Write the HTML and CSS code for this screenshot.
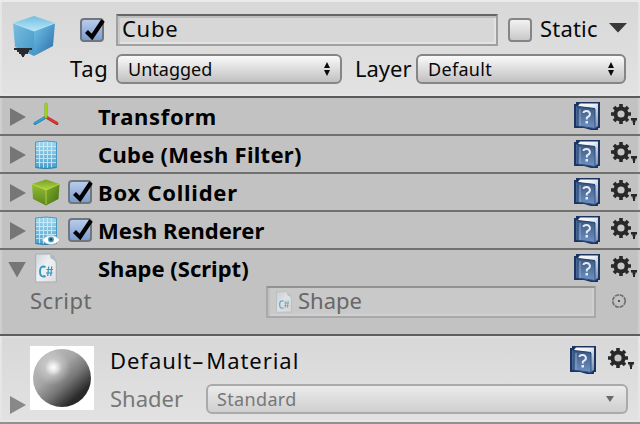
FILE: index.html
```html
<!DOCTYPE html>
<html lang="en">
<head>
<meta charset="utf-8">
<title>Inspector</title>
<link rel="stylesheet" href="styles.css">
</head>
<body>
<svg class="defs" aria-hidden="true">
  <defs>
    <linearGradient id="cubeTop" x1="0" y1="0" x2="0" y2="1"><stop offset="0" stop-color="#72bfe2"/><stop offset="1" stop-color="#b9e6f5"/></linearGradient>
    <linearGradient id="cubeLeft" x1="0" y1="0" x2="1" y2="1"><stop offset="0" stop-color="#79bede"/><stop offset="1" stop-color="#4597c9"/></linearGradient>
    <linearGradient id="cubeRight" x1="0" y1="0" x2="1" y2="1"><stop offset="0" stop-color="#74c4ea"/><stop offset="1" stop-color="#276da7"/></linearGradient>
    <linearGradient id="greenTop" x1="0" y1="0" x2="0" y2="1"><stop offset="0" stop-color="#779f21"/><stop offset="1" stop-color="#b4d843"/></linearGradient>
    <linearGradient id="greenLeft" x1="0" y1="0" x2="0" y2="1"><stop offset="0" stop-color="#96bf31"/><stop offset="1" stop-color="#5a861d"/></linearGradient>
    <linearGradient id="greenRight" x1="0" y1="0" x2="1" y2="1"><stop offset="0" stop-color="#88b12b"/><stop offset="1" stop-color="#3f6e12"/></linearGradient>
    <linearGradient id="meshFill" x1="0" y1="0" x2="0" y2="1"><stop offset="0" stop-color="#a3daf1"/><stop offset="1" stop-color="#459fce"/></linearGradient>
    <linearGradient id="pageFill" x1="0" y1="0" x2="1" y2="1"><stop offset="0" stop-color="#cbd5dd"/><stop offset=".45" stop-color="#eef1f3"/><stop offset="1" stop-color="#dcdcdc"/></linearGradient>
    <linearGradient id="bookFill" x1="0" y1="0" x2="0" y2="1"><stop offset="0" stop-color="#3d5981"/><stop offset="1" stop-color="#7092c2"/></linearGradient>
    <linearGradient id="pagesFill" x1="0" y1="0" x2="1" y2="1"><stop offset="0" stop-color="#ffffff"/><stop offset=".45" stop-color="#e8edf5"/><stop offset="1" stop-color="#7188ae"/></linearGradient>
    <linearGradient id="ballShade" x1=".14" y1=".1" x2=".86" y2=".9"><stop offset="0" stop-color="#bdbdbd"/><stop offset=".35" stop-color="#a6a6a6"/><stop offset=".6" stop-color="#787878"/><stop offset=".88" stop-color="#2b2b2b"/><stop offset="1" stop-color="#242424"/></linearGradient>
    <radialGradient id="ballGlow" cx=".35" cy=".32" r=".3"><stop offset="0" stop-color="#fff"/><stop offset=".2" stop-color="#fff" stop-opacity=".75"/><stop offset=".5" stop-color="#fff" stop-opacity=".25"/><stop offset="1" stop-color="#fff" stop-opacity="0"/></radialGradient>
  </defs>
  <symbol id="check" viewBox="0 0 28 28"><path d="M5.5 14.500 11 20 22 3.500" fill="none" stroke="#000" stroke-width="4.2"/></symbol>
  <symbol id="mesh" viewBox="0 0 24 30">
    <path d="M1.5 2Q12 0 22.5 2V27.500Q12 29.500 1.500 27.500Z" fill="url(#meshFill)" stroke="#2d8fc2" stroke-width=".8"/>
    <path d="M5.500 2V28M9.500 2V28M13.500 2V28M17.500 2V28M2 6.500H22M2 10.500H22M2 14.500H22M2 18.500H22M2 22.500H22" stroke="#d3f0fc" stroke-width="1.1" opacity=".8"/>
    <path d="M1.500 27.500Q12 29.500 22.500 27.500" fill="none" stroke="#3f7fa6" stroke-width="1"/>
  </symbol>
  <symbol id="page" viewBox="0 0 22 30">
    <path d="M.7 1H15.500Q20.500 4 21.300 10V29H.7Z" fill="url(#pageFill)" stroke="#a8aeb3" stroke-width="1"/>
    <path d="M15 1.300Q20.500 4 21 10Q19 6 15.500 5.500Z" fill="#aab9c4"/>
    <path d="M10.500 14Q5 12 5 18.500T10.500 23" fill="none" stroke="#3398c5" stroke-width="1.900"/>
    <path d="M13.700 13.500 12.700 23M16.700 13.500 15.700 23M11.500 16.500H18M11 20H17.500" stroke="#3b92bb" stroke-width="1.200"/>
  </symbol>
  <symbol id="book" viewBox="0 0 26 28">
    <path d="M2 0H26V26H24V28H17L10 26H0V2H2Z" fill="#1c3560"/>
    <path d="M6 1.500H24V24L21 26V6L4 4Z" fill="url(#pagesFill)"/>
    <path d="M2 4 4 5V24H2Z" fill="#476792"/>
    <path d="M4 5 21 7V26.500L4 24Z" fill="url(#bookFill)" stroke="#2f5180" stroke-width="1"/>
    <path d="M6 7V24" stroke="#8ba8d1" stroke-width="1"/>
    <path d="M9.500 11Q9.500 9 12.500 9T16 12Q16 14 12.800 15.500V17.500" fill="none" stroke="#e4ebf8" stroke-width="1.900"/>
    <path d="M11.500 19H14V21.500H11.500Z" fill="#e4ebf8"/>
  </symbol>
  <symbol id="gear" viewBox="0 0 28 24">
    <path d="M10 0V20M0 10H20M3 3 17 17M17 3 3 17" stroke="#282828" stroke-width="3.600"/>
    <circle cx="10" cy="10" r="7.600" fill="#282828"/><circle cx="10" cy="10" r="3.600" fill="#c6c6c6"/>
    <path d="M20 14H26V16.500H24.500V18.500H24V21H22V18.500H21.500V16.500H20Z" fill="#282828"/>
  </symbol>
  <symbol id="updown" viewBox="0 0 6 14"><path d="M3 0 6 6H0ZM0 8H6L3 14Z" fill="#0b0b0b"/></symbol>
</svg>

<main class="inspector">
  <header class="object">
    <div class="object-icon">
      <svg width="46" height="44" viewBox="0 0 46 44">
        <path d="M1 8 22 1 43 8 22 16Z" fill="url(#cubeTop)"/>
        <path d="M1 8 22 16V41L3 32Z" fill="url(#cubeLeft)"/>
        <path d="M43 8 22 16V41L41 31Z" fill="url(#cubeRight)"/>
        <path d="M1 8 22 16 43 8" fill="none" stroke="#ade4f8" stroke-width="1"/>
        <path d="M2 33H20V35H17V37H16V39H13V40.500H12V42H10V40.500H9V39H7V37H5V35H2Z" fill="#292c2e"/>
      </svg>
    </div>
    <div class="fields">
      <div class="name-line">
        <span class="checkbox on"><svg><use href="#check"/></svg></span>
        <div class="textbox name"><span class="t-cube">Cube</span></div>
        <span class="checkbox"></span>
        <span class="t-static">Static</span>
        <svg class="static-arrow" viewBox="0 0 20 10"><path d="M1 0H19L11.500 8L10 9.500L8.500 8Z" fill="#383838"/></svg>
      </div>
      <div class="tag-line">
        <span class="t-tag">Tag</span>
        <div class="select tag"><span class="t-untagged">Untagged</span><svg><use href="#updown"/></svg></div>
        <span class="t-layer">Layer</span>
        <div class="select layer"><span class="t-default">Default</span><svg><use href="#updown"/></svg></div>
      </div>
    </div>
  </header>

  <section class="row">
    <i class="fold"></i>
    <svg class="kind" viewBox="0 0 32 30"><g fill="none" stroke-width="3" stroke-linecap="round"><path d="M15 15 4 21.500" stroke="#28759c"/><path d="M15 15 4 21" stroke="#329ed5" stroke-width="2"/><path d="M15 15 26 21.500" stroke="#a61f20"/><path d="M15 15 26 21" stroke="#df3434" stroke-width="2"/><path d="M15 15V2" stroke="#80ae16"/><path d="M15 15V2" stroke="#9bd60c" stroke-width="2"/></g></svg>
    <span class="enable"></span><h2 class="t-transform">Transform</h2>
    <svg class="book"><use href="#book"/></svg><svg class="gear"><use href="#gear"/></svg>
  </section>
  <section class="row">
    <i class="fold"></i>
    <svg class="kind" viewBox="0 0 32 30"><use href="#mesh" x="3" width="24" height="30"/></svg>
    <span class="enable"></span><h2 class="t-filter">Cube (Mesh Filter)</h2>
    <svg class="book"><use href="#book"/></svg><svg class="gear"><use href="#gear"/></svg>
  </section>
  <section class="row">
    <i class="fold"></i>
    <svg class="kind" viewBox="0 0 32 30"><path d="M1 6 15 1.500 28.500 6 15 12Z" fill="url(#greenTop)"/><path d="M1 6 15 12V27.500L2 21Z" fill="url(#greenLeft)"/><path d="M28.500 6 15 12V27.500L27.500 21Z" fill="url(#greenRight)"/><path d="M1 6 15 12 28.500 6M15 12V26" fill="none" stroke="#badb4e" stroke-width=".8"/></svg>
    <span class="enable"><span class="checkbox on"><svg><use href="#check"/></svg></span></span><h2 class="t-collider">Box Collider</h2>
    <svg class="book"><use href="#book"/></svg><svg class="gear"><use href="#gear"/></svg>
  </section>
  <section class="row">
    <i class="fold"></i>
    <svg class="kind" viewBox="0 0 32 30"><use href="#mesh" x="3" width="24" height="30"/><path d="M11 24Q20 14.500 29 24Q20 33 11 24Z" fill="#fff" stroke="#a5adb2" stroke-width=".5"/><circle cx="20" cy="23.500" r="3" fill="#4ba4c9"/><circle cx="20" cy="23.500" r="1.400" fill="#174d6b"/></svg>
    <span class="enable"><span class="checkbox on"><svg><use href="#check"/></svg></span></span><h2 class="t-renderer">Mesh Renderer</h2>
    <svg class="book"><use href="#book"/></svg><svg class="gear"><use href="#gear"/></svg>
  </section>
  <section class="script">
    <div class="row">
      <i class="fold open"></i>
      <svg class="kind" viewBox="0 0 32 30"><use href="#page" x="4" width="22" height="30"/></svg>
      <span class="enable"></span><h2 class="t-script">Shape (Script)</h2>
      <svg class="book"><use href="#book"/></svg><svg class="gear"><use href="#gear"/></svg>
    </div>
    <div class="property">
      <span class="t-prop">Script</span>
      <div class="textbox object-field"><svg><use href="#page"/></svg><span class="t-shape">Shape</span></div>
      <svg class="picker" viewBox="0 0 16 16"><circle cx="8" cy="8" r="6.200" fill="none" stroke="#707070" stroke-width="1.700" stroke-dasharray="4 .87"/><rect x="7" y="7" width="2" height="2" fill="#555"/></svg>
    </div>
  </section>
  <section class="material">
    <i class="fold"></i>
    <svg class="preview" viewBox="0 0 64 64"><rect width="64" height="64" fill="#fff"/><circle cx="32" cy="32" r="29" fill="url(#ballShade)"/><circle cx="32" cy="32" r="29" fill="url(#ballGlow)"/></svg>
    <div class="material-body">
      <div class="material-title"><span class="t-material">Default<span class="dash">–</span>Material</span><svg class="book"><use href="#book"/></svg><svg class="gear"><use href="#gear"/></svg></div>
      <div class="shader"><span class="t-shader">Shader</span><div class="select shader-select"><span class="t-standard">Standard</span><i class="down"></i></div></div>
    </div>
  </section>
</main>
</body>
</html>
```
FILE: styles.css
```css
* { box-sizing: border-box; }
body { margin: 0; font: 22px/30px "Noto Sans", sans-serif; color: #080808; background: #c2c2c2; }
.defs { position: absolute; width: 0; height: 0; }
svg { display: block; flex: none; overflow: visible; }
span, h2 { white-space: nowrap; }
.inspector { width: 640px; height: 424px; overflow: hidden; box-shadow: inset 2px 0 rgba(255,255,255,.2), inset -2px 0 rgba(255,255,255,.2); }
.object { display: flex; height: 98px; padding-left: 12px; border-top: 2px solid #ebebeb; border-bottom: 2px solid #5b5b5b; background: linear-gradient(#d8d8d8, #e2e2e2); box-shadow: inset 2px 0 #e6e6e6, inset -2px 0 #e6e6e6, inset 0 -2px #e6e6e6; }
.object-icon { width: 58px; padding-top: 13px; }
.fields { display: flex; flex-direction: column; }
.name-line { display: flex; align-items: center; height: 32px; margin-top: 12px; padding-left: 10px; }
.tag-line { display: flex; align-items: center; height: 30px; margin-top: 8px; }
.checkbox { display: block; flex: none; width: 24px; height: 24px; border: 2px solid #858585; border-radius: 4px; background: linear-gradient(#f2f2f2, #c9c9c9); }
.checkbox.on { border-color: #71757d; background: linear-gradient(#b8cce9, #7b9dd2); }
.checkbox svg { width: 28px; height: 28px; margin: -3px 0 0 -1px; }
.textbox { display: flex; align-items: center; height: 32px; border: 2px solid #a0a0a0; border-top-color: #666; background: #d7d7d7; box-shadow: inset 0 2px #bebebe, inset 2px 0 #c8c8c8, inset -2px -2px #e3e3e3; }
.name { width: 382px; margin: 0 10px 0 12px; padding-left: 4px; }
.t-cube { margin-top: -4px; letter-spacing: .7px; }
.t-static { width: 68px; margin: -4px 0 0 8px; letter-spacing: .2px; }
.static-arrow { width: 20px; height: 10px; margin-top: -4px; }
.select { display: flex; align-items: center; justify-content: space-between; height: 30px; font-size: 18px; border: 2px solid #858585; border-radius: 6px; background: linear-gradient(#fafafa, #c2c0c2); }
.select svg { width: 6px; height: 14px; }
.tag { width: 226px; padding: 0 10px; }
.layer { width: 210px; padding: 0 10px; }
.t-tag { width: 46px; margin-top: -2px; letter-spacing: .7px; }
.t-layer { width: 61px; margin: -2px 0 0 13px; }
.t-untagged { margin-top: -1px; }
.t-default { margin-top: -1px; letter-spacing: .3px; }
.row { display: flex; align-items: center; height: 38px; padding-left: 10px; border-bottom: 2px solid #707070; }
.fold { flex: none; width: 16px; height: 18px; margin: 2px 6px 0 0; background: #767676; clip-path: polygon(0 0, 100% 50%, 0 100%); }
.fold.open { width: 18px; height: 16px; margin: 3px 6px 0 -2px; clip-path: polygon(0 0, 100% 0, 50% 100%); }
.kind { width: 32px; height: 30px; margin: 2px 0 0 -1px; }
.enable { width: 35px; padding-left: 5px; }
h2 { flex: 1; margin: 0; font-size: 22px; font-weight: 700; color: #000; }
.t-transform { letter-spacing: .65px; }
.t-filter { letter-spacing: .27px; }
.t-collider { letter-spacing: .75px; }
.book { width: 26px; height: 28px; margin-right: 11px; }
.gear { width: 28px; height: 24px; margin: -1px 1px 0 0; }
.script { height: 86px; border-bottom: 2px solid #5e5e5e; }
.script .row { height: 36px; border: 0; }
.script .kind { margin-top: 0; }
.property { display: flex; align-items: center; height: 32px; padding-left: 30px; color: #676767; }
.t-prop { width: 236px; margin-top: -4px; letter-spacing: .5px; }
.object-field { width: 330px; height: 32px; padding-left: 8px; border-color: #a9a9a9; border-top-color: #919191; background: #c9c9c9; box-shadow: inset 2px 0 #c0c0c0, inset -2px -2px #d0d0d0; }
.object-field svg { width: 16px; height: 22px; margin-right: 6px; opacity: .6; }
.t-shape { margin-top: -4px; }
.picker { width: 16px; height: 16px; margin: -2px 0 0 15px; }
.material { display: flex; height: 88px; padding: 10px 12px 0 10px; border-bottom: 2px solid #919191; background: linear-gradient(#d8d8d8, #e2e2e2); box-shadow: inset 2px 0 #e6e6e6, inset -2px 0 #e6e6e6, inset 0 2px #dedede, inset 0 -2px #e7e7e7; }
.material .fold { margin: 50px 4px 0 0; background: #888; }
.preview { width: 64px; height: 64px; }
.material-body { margin-left: 16px; }
.material-title { display: flex; height: 30px; align-items: center; }
.t-material { width: 460px; margin-top: -3px; letter-spacing: .95px; }
.dash { display: inline-block; width: 14px; }
.material .book { margin: -2px 12px 0 0; }
.material .gear { margin: -2px 0 0; }
.shader { display: flex; align-items: center; height: 30px; margin-top: 8px; color: #777; }
.t-shader { width: 96px; margin-top: -2px; }
.shader-select { width: 422px; padding: 0 12px 0 9px; border-color: #aaa; background: linear-gradient(#ebebeb, #cfcfcf); }
.t-standard { margin-top: -1px; letter-spacing: .35px; }
.down { width: 8px; height: 6px; background: #696969; clip-path: polygon(0 0, 100% 0, 50% 100%); }
```
